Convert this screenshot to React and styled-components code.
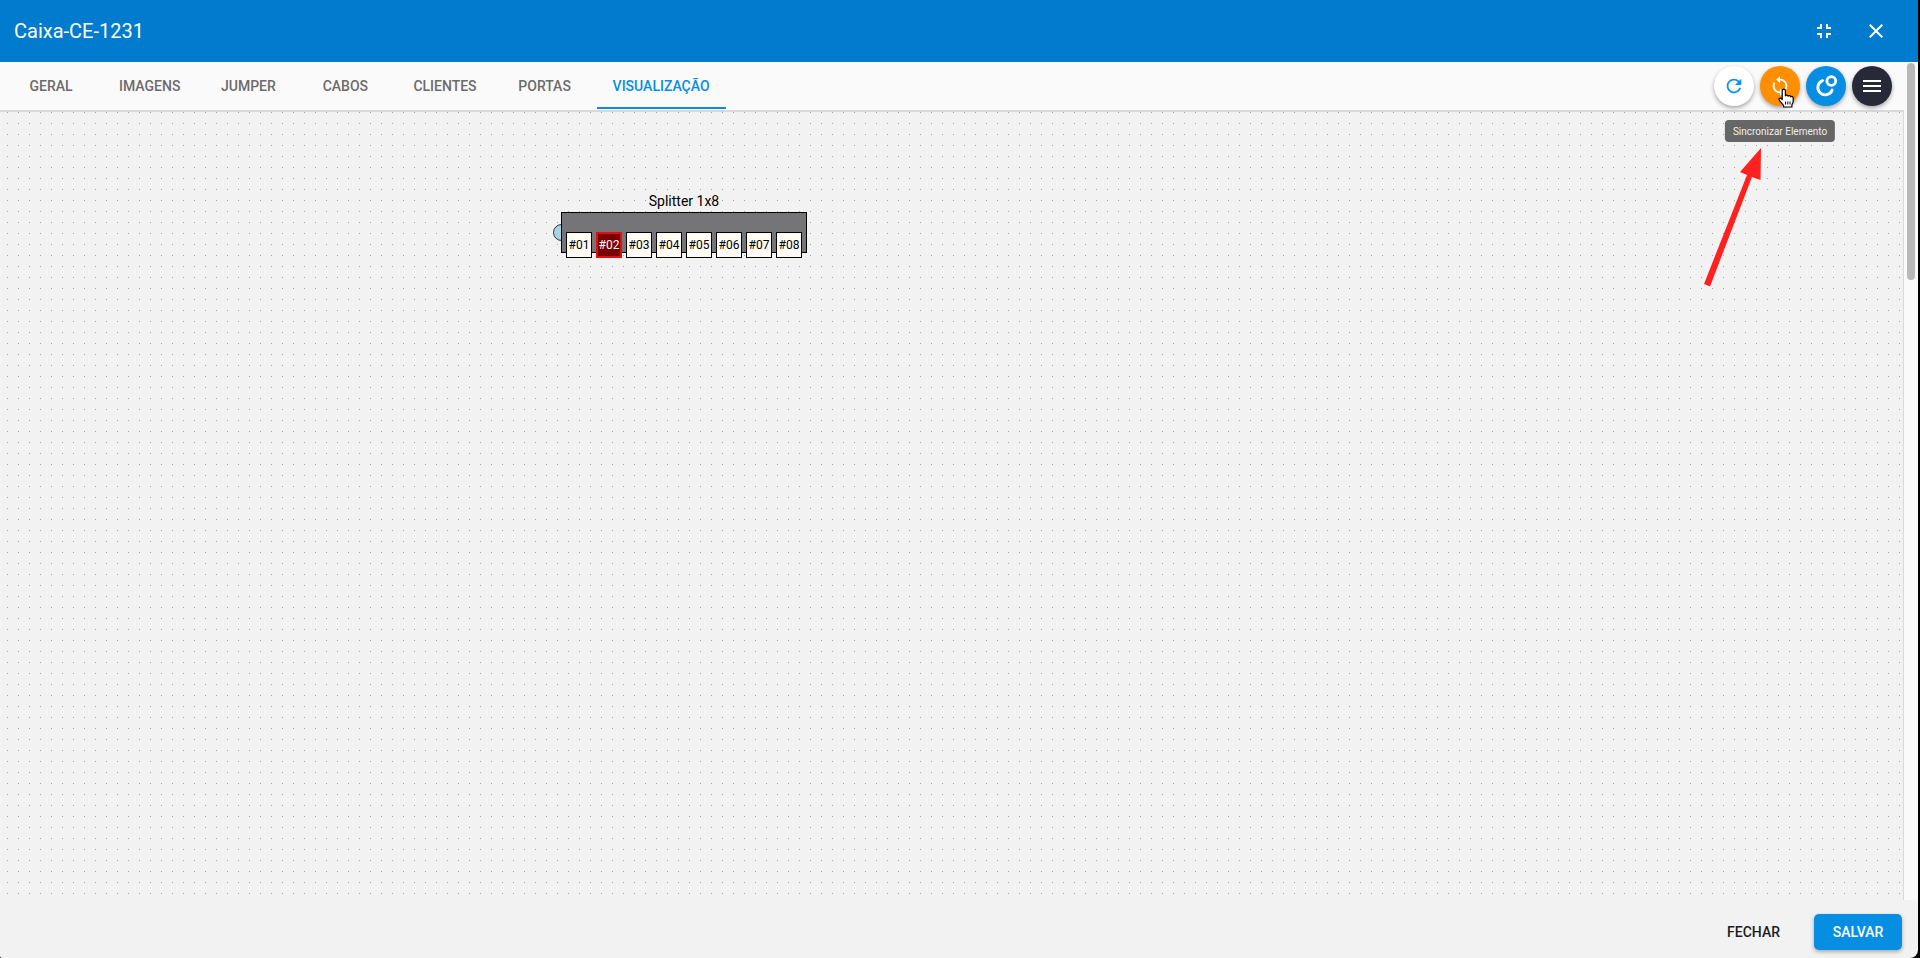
import React, { useState } from 'react';
import styled, { createGlobalStyle, ThemeProvider } from 'styled-components';
import {
    MdClose,
    MdFullscreenExit,
    MdMenu,
    MdRefresh,
    MdSync,
} from 'react-icons/md';

const theme = {
    header: '#007bce',
    primary: '#068ee3',
    warning: '#ff8f00',
    dark: '#272838',
    surface: '#fafafa',
    canvas: '#f2f2f2',
    line: '#d9d9d9',
};

const tabs = [
    'Geral',
    'Imagens',
    'Jumper',
    'Cabos',
    'Clientes',
    'Portas',
    'Visualização',
];

const ports = [
    { id: '#01' },
    { id: '#02', busy: true },
    { id: '#03' },
    { id: '#04' },
    { id: '#05' },
    { id: '#06' },
    { id: '#07' },
    { id: '#08' },
];

const GlobalStyle = createGlobalStyle`
    * {
        box-sizing: border-box;
    }

    body {
        margin: 0;
        background: #000;
        font-family: Roboto, "Liberation Sans", sans-serif;
    }

    button {
        border: 0;
        padding: 0;
        background: none;
        font-family: inherit;
        cursor: pointer;
    }
`;

const Dialog = styled.div`
    display: flex;
    flex-direction: column;
    height: 100vh;
    margin-right: 2px;
    overflow: hidden;
    border-radius: 0 0 8px 2px;
    background: ${({ theme: { canvas } }) => canvas};
`;

const Header = styled.header`
    display: flex;
    align-items: center;
    gap: 28px;
    flex: none;
    height: 62px;
    padding: 0 30px 0 14px;
    color: #fff;
    background: ${({ theme: { header } }) => header};
`;

const Title = styled.h1`
    flex: 1;
    margin: 0;
    font-size: 20px;
    font-weight: 400;
    line-height: 24px;
`;

const HeaderButton = styled.button`
    display: flex;
    color: #fff;
    font-size: 24px;
`;

const Body = styled.div`
    display: flex;
    flex: 1;
    min-height: 0;
`;

const Content = styled.main`
    display: flex;
    flex: 1;
    flex-direction: column;
    min-width: 0;
`;

const TabBar = styled.div`
    display: flex;
    align-items: center;
    justify-content: space-between;
    flex: none;
    height: 50px;
    padding: 0 12px 0 6px;
    border-bottom: 2px solid ${({ theme: { line } }) => line};
    background: ${({ theme: { surface } }) => surface};
`;

const Tabs = styled.nav`
    display: flex;
    align-self: stretch;
    gap: 7px;
`;

const Tab = styled.button`
    min-width: 90px;
    height: 47px;
    padding: 2px 16px 0;
    border-bottom: 2px solid
        ${({ $active, theme: { primary } }) =>
            $active ? primary : 'transparent'};
    color: ${({ $active, theme: { primary } }) =>
        $active ? primary : '#6b6b6b'};
    font-size: 14px;
    font-weight: 500;
    text-transform: uppercase;
`;

const Actions = styled.div`
    display: flex;
    gap: 6px;
`;

const ActionItem = styled.div`
    position: relative;
`;

const ActionButton = styled.button`
    display: flex;
    align-items: center;
    justify-content: center;
    width: 40px;
    height: 40px;
    border-radius: 50%;
    color: ${({ $color }) => $color || '#fff'};
    background: ${({ $background }) => $background};
    box-shadow: 0 2px 4px rgba(0, 0, 0, 0.35);
    font-size: ${({ $size }) => $size || 20}px;
`;

const Tooltip = styled.span`
    position: absolute;
    z-index: 2;
    top: 54px;
    left: 50%;
    padding: 5px 8px 3px;
    border-radius: 4px;
    color: #eee;
    background: #666;
    font-size: 10px;
    line-height: 14px;
    white-space: nowrap;
    transform: translateX(-50%);
`;

const Pointer = styled.svg`
    position: absolute;
    z-index: 3;
    top: 22px;
    left: 17px;
    pointer-events: none;
`;

const Arrow = styled.svg`
    position: absolute;
    top: 36px;
    right: 141px;
    pointer-events: none;
`;

const Canvas = styled.section`
    position: relative;
    flex: 1;
    border-right: 1px solid ${({ theme: { line } }) => line};
    background: ${({ theme: { canvas } }) => canvas}
        conic-gradient(from 270deg at 1px 1px, #a3a3a3 90deg, transparent 0) 7px
        0 / 11px 11px;
`;

const Splitter = styled.div`
    position: absolute;
    top: 79px;
    left: 561px;
`;

const SplitterName = styled.div`
    height: 21px;
    color: #000;
    font-size: 14px;
    line-height: 20px;
    text-align: center;
`;

const SplitterBody = styled.div`
    position: relative;
    height: 41px;
    padding: 19px 4px 0;
    border: 1px solid #000;
    background: #757577;
`;

const SplitterInput = styled.span`
    position: absolute;
    z-index: -1;
    top: 12px;
    left: -8px;
    width: 17px;
    height: 17px;
    border: 1px solid #333;
    border-radius: 50%;
    background: #a5d3e8;
`;

const SplitterLayer = styled.div`
    position: relative;
    z-index: 0;
`;

const Ports = styled.div`
    display: flex;
    gap: 4px;
`;

const Port = styled.button`
    width: 26px;
    height: 26px;
    border: ${({ $busy }) => ($busy ? '2px solid #e80d0d' : '1px solid #000')};
    color: ${({ $busy }) => ($busy ? '#fff' : '#000')};
    background: ${({ $busy }) => ($busy ? '#780000' : '#fffaf3')};
    font-size: 12px;
    line-height: 20px;
    white-space: nowrap;
`;

const ScrollRail = styled.div`
    flex: none;
    width: 14px;
    padding: 1px 3px;
    background: ${({ theme: { surface } }) => surface};
`;

const ScrollThumb = styled.div`
    height: 26%;
    border-radius: 4px;
    background: #b8b8b8;
`;

const Footer = styled.footer`
    display: flex;
    align-items: center;
    justify-content: flex-end;
    gap: 16px;
    flex: none;
    height: 58px;
    padding: 6px 16px 0 0;
`;

const FooterButton = styled.button`
    min-width: 88px;
    height: 36px;
    padding: 0 18px;
    border-radius: 5px;
    color: ${({ $primary }) => ($primary ? '#fff' : '#1c1c1c')};
    background: ${({ $primary, theme: { primary } }) =>
        $primary ? primary : 'none'};
    box-shadow: ${({ $primary }) =>
        $primary ? '0 2px 4px rgba(0, 0, 0, 0.3)' : 'none'};
    font-size: 14px;
    font-weight: 500;
    text-transform: uppercase;
`;

const OrbitIcon = () => (
    <svg width="24" height="24" viewBox="0 0 24 24" fill="none">
        <g stroke="currentColor" strokeWidth="2.8">
            <circle cx="17.3" cy="7" r="4.4" />
            <path d="M8.6 6.6A7.4 7.4 0 1 0 18.2 16" strokeLinecap="round" />
        </g>
    </svg>
);

const HandPointer = () => (
    <Pointer width="18" height="20" viewBox="0 0 18 20">
        <path
            d="M5.2 11.5V2.8a1.6 1.6 0 0 1 3.2 0v5c.3-1 2.5-.9 2.7.4.5-.9 2.4-.6 2.6.6.8-.7 2.5-.2 2.5 1.3v3.2c0 1.7-1.3 2.7-1.3 4V19H6.6v-1.5c-1-1.5-2.7-3.1-4.3-5.4-1-1.5.8-2.8 2-1.5z"
            fill="#fff"
            stroke="#000"
            strokeWidth="1.2"
            strokeLinejoin="round"
        />
        <path
            d="M8.6 13.5v3M10.8 13.5v3M13 13.5v3"
            stroke="#000"
            strokeWidth="1"
        />
    </Pointer>
);

const App = () => {
    const [activeTab, setActiveTab] = useState('Visualização');

    return (
        <ThemeProvider theme={theme}>
            <GlobalStyle />
            <Dialog role="dialog" aria-labelledby="title">
                <Header>
                    <Title id="title">Caixa-CE-1231</Title>
                    <HeaderButton aria-label="Restaurar">
                        <MdFullscreenExit />
                    </HeaderButton>
                    <HeaderButton aria-label="Fechar janela">
                        <MdClose />
                    </HeaderButton>
                </Header>
                <Body>
                    <Content>
                        <TabBar>
                            <Tabs>
                                {tabs.map((tab) => (
                                    <Tab
                                        key={tab}
                                        $active={tab === activeTab}
                                        onClick={() => setActiveTab(tab)}
                                    >
                                        {tab}
                                    </Tab>
                                ))}
                            </Tabs>
                            <Actions>
                                <ActionButton
                                    aria-label="Atualizar"
                                    $background="#fff"
                                    $color="#0a94ea"
                                    $size={22}
                                >
                                    <MdRefresh />
                                </ActionButton>
                                <ActionItem>
                                    <ActionButton
                                        aria-label="Sincronizar Elemento"
                                        $background={theme.warning}
                                        $size={22}
                                    >
                                        <MdSync />
                                    </ActionButton>
                                    <Tooltip role="tooltip">
                                        Sincronizar Elemento
                                    </Tooltip>
                                    <HandPointer />
                                </ActionItem>
                                <ActionButton
                                    aria-label="Conexões"
                                    $background={theme.primary}
                                >
                                    <OrbitIcon />
                                </ActionButton>
                                <ActionButton
                                    aria-label="Menu"
                                    $background={theme.dark}
                                    $size={24}
                                >
                                    <MdMenu />
                                </ActionButton>
                            </Actions>
                        </TabBar>
                        <Canvas>
                            <Splitter>
                                <SplitterName>Splitter 1x8</SplitterName>
                                <SplitterLayer>
                                    <SplitterInput />
                                    <SplitterBody>
                                        <Ports>
                                            {ports.map(({ id, busy }) => (
                                                <Port key={id} $busy={busy}>
                                                    {id}
                                                </Port>
                                            ))}
                                        </Ports>
                                    </SplitterBody>
                                </SplitterLayer>
                            </Splitter>
                            <Arrow width="58" height="140" viewBox="0 0 58 140">
                                <path
                                    d="M57 0L56.500 32L48 29L6 138.500L0 136L43 27L36 24z"
                                    fill="#ff2020"
                                />
                            </Arrow>
                        </Canvas>
                    </Content>
                    <ScrollRail>
                        <ScrollThumb />
                    </ScrollRail>
                </Body>
                <Footer>
                    <FooterButton>Fechar</FooterButton>
                    <FooterButton $primary>Salvar</FooterButton>
                </Footer>
            </Dialog>
        </ThemeProvider>
    );
};

export default App;
